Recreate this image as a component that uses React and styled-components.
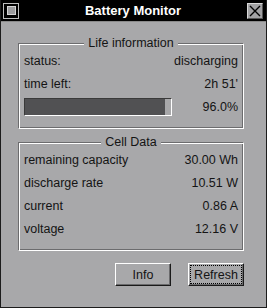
import React from 'react'
import styled, { createGlobalStyle } from 'styled-components'

const Global = createGlobalStyle`
body{
    margin: 0;
    background: #a8a8aa;
}
`

const Window = styled.div`
width: 267px;
height: 308px;
box-sizing: border-box;
border: 1px solid #1c1c1c;
border-top: none;
background: #a8a8aa;
font-family: "Liberation Sans", Arial, sans-serif;
color: #141414;
display: flex;
flex-direction: column;
`

const TitleBar = styled.div`
height: 21px;
background: #000;
border-bottom: 1px solid #8a8a8a;
display: flex;
align-items: center;
padding: 0 3px 0 2px;
h1{
    flex: 1;
    margin: 0;
    text-align: center;
    color: white;
    font-size: 13px;
    font-weight: bold;
    line-height: 21px;
}
`

const MenuBox = styled.span`
width: 14px;
height: 14px;
border: 1px solid #bdbdbd;
background: #000;
display: flex;
align-items: center;
justify-content: center;
span{
    width: 7px;
    height: 7px;
    background: #9c9c9e;
    border: 1px solid #d4d4d4;
}
`

const CloseBox = styled.span`
width: 14px;
height: 14px;
background: #a2a2a4;
border: 1px solid;
border-color: #d8d8d8 #555 #555 #d8d8d8;
display: flex;
align-items: center;
justify-content: center;
`

const Body = styled.div`
flex: 1;
padding: 15px 22px 0 17px;
display: flex;
flex-direction: column;
`

const Group = styled.fieldset`
margin: 0 0 ${p => p.$gap || 0}px 0;
padding: 0 5px ${p => p.$bottom}px 5px;
border: 1px solid;
border-color: #6c6c6e #fff #fff #6c6c6e;
box-shadow: inset 1px 1px 0 #fff, inset -1px -1px 0 #6c6c6e;
min-width: 0;
legend{
    margin: 0 auto;
    padding: 0 4px;
    font-size: 12.5px;
    line-height: 12px;
    background: #a8a8aa;
}
`

const Row = styled.div`
height: ${p => p.$h || 23}px;
display: flex;
align-items: center;
justify-content: space-between;
font-size: 12.5px;
`

const Bar = styled.div`
width: 146px;
height: 16px;
border: 1px solid;
border-color: #3a3a3a #fff #fff #3a3a3a;
background: #a8a8aa;
div{
    height: 100%;
    background: #515153;
}
`

const Buttons = styled.div`
margin-top: 12px;
display: flex;
justify-content: flex-end;
gap: 17px;
`

const Button = styled.button`
width: ${p => p.$w}px;
height: 23px;
box-sizing: border-box;
padding: 0;
font-family: "Liberation Sans", Arial, sans-serif;
font-size: 12.5px;
color: #141414;
background: #a8a8aa;
border: 1px solid;
border-color: #fff #1a1a1a #1a1a1a #fff;
box-shadow: inset -1px -1px 0 #6a6a6c;
outline: ${p => p.$focus ? '1px dotted #000' : 'none'};
outline-offset: -3px;
`

const lifeRows = [
    ['status:', 'discharging'],
    ['time left:', "2h 51'"],
]

const cellRows = [
    ['remaining capacity', '30.00 Wh'],
    ['discharge rate', '10.51 W'],
    ['current', '0.86 A'],
    ['voltage', '12.16 V'],
]

const App = () => {
    const charge = 96.0
    return <>
        <Global />
        <Window>
            <TitleBar>
                <MenuBox><span /></MenuBox>
                <h1>Battery Monitor</h1>
                <CloseBox>
                    <svg width="12" height="12" viewBox="0 0 12 12">
                        <path d="M1 1 L11 11 M11 1 L1 11" stroke="#000" strokeWidth="1.4" />
                    </svg>
                </CloseBox>
            </TitleBar>
            <Body>
                <Group $bottom={9} $gap={7}>
                    <legend>Life information</legend>
                    {lifeRows.map(([k, v]) => <Row key={k}><span>{k}</span><span>{v}</span></Row>)}
                    <Row $h={24}>
                        <Bar><div style={{ width: charge + '%' }} /></Bar>
                        <span>{charge.toFixed(1)}%</span>
                    </Row>
                </Group>
                <Group $bottom={10}>
                    <legend>Cell Data</legend>
                    {cellRows.map(([k, v]) => <Row key={k}><span>{k}</span><span>{v}</span></Row>)}
                </Group>
                <Buttons>
                    <Button $w={56}>Info</Button>
                    <Button $w={56} $focus>Refresh</Button>
                </Buttons>
            </Body>
        </Window>
    </>
}

export default App
